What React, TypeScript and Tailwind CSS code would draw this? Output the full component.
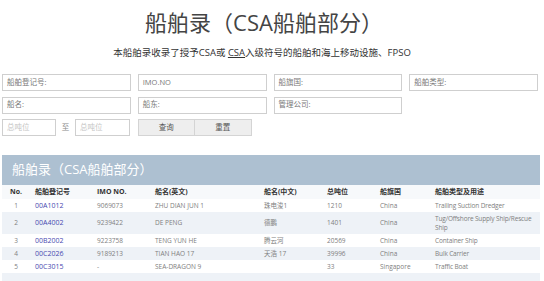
import React from "react";

const font = { fontFamily: '"Open Sans", "Noto Sans CJK SC", sans-serif' };

const rows = [
  { no: "1", reg: "00A1012", imo: "9069073", en: "ZHU DIAN JUN 1", cn: "珠电浚1", gt: "1210", flag: "China", type: "Trailing Suction Dredger" },
  { no: "2", reg: "00A4002", imo: "9239422", en: "DE PENG", cn: "德鹏", gt: "1401", flag: "China", type: "Tug/Offshore Supply Ship/Rescue Ship" },
  { no: "3", reg: "00B2002", imo: "9223758", en: "TENG YUN HE", cn: "腾云河", gt: "20569", flag: "China", type: "Container Ship" },
  { no: "4", reg: "00C2026", imo: "9189213", en: "TIAN HAO 17", cn: "天浩 17", gt: "39996", flag: "China", type: "Bulk Carrier" },
  { no: "5", reg: "00C3015", imo: "-", en: "SEA-DRAGON 9", cn: "", gt: "33", flag: "Singapore", type: "Traffic Boat" },
];

const cols = "grid grid-cols-[28px_62px_58px_109px_63px_53px_55px_110px]";

function Field({ label, light }: { label: string; light?: boolean }) {
  return (
    <div
      className={`h-[17px] border border-[#cfcfcf] bg-white flex items-center px-[4px] text-[7.5px] ${
        light ? "text-[#c4c4c4]" : "text-[#777]"
      }`}
    >
      {label}
    </div>
  );
}

export default function App() {
  return (
    <div className="w-[544px] h-[281px] overflow-hidden bg-white" style={font}>
      <div className="mt-[7px] pr-[16px] text-center text-[22px] leading-[30px] text-[#444]">
        船舶录（CSA船舶部分）
      </div>
      <div className="mt-[9px] pr-[20px] text-center text-[9.5px] leading-[14px] text-[#333]">
        本船舶录收录了授予CSA或 <span className="underline">CSA</span>入级符号的船舶和海上移动设施、FPSO
      </div>

      <div className="mt-[14px] px-[2px] w-[540px] grid grid-cols-4 gap-x-[7px] gap-y-[5.5px]">
        <Field label="船舶登记号:" />
        <Field label="IMO.NO" />
        <Field label="船旗国:" />
        <Field label="船舶类型:" />
        <Field label="船名:" />
        <Field label="船东:" />
        <Field label="管理公司:" />
        <div />
        <div className="flex items-center h-[17px]">
          <div className="w-[54px]">
            <Field label="总吨位" light />
          </div>
          <div className="w-[19px] text-center text-[7.5px] text-[#888]">至</div>
          <div className="w-[55px]">
            <Field label="总吨位" light />
          </div>
        </div>
        <div className="flex h-[17px]">
          <div className="w-[57px] border border-[#d4d4d4] bg-[#eeeeee] flex items-center justify-center text-[7.5px] text-[#555]">
            查询
          </div>
          <div className="w-[57px] border border-l-0 border-[#d4d4d4] bg-[#eeeeee] flex items-center justify-center text-[7.5px] text-[#555]">
            重置
          </div>
        </div>
      </div>

      <div className="mt-[19px] mx-[2px] w-[538px]">
        <div className="h-[30px] bg-[#adc0d1] pl-[10px] pt-[5px] text-[13px] leading-[18px] text-white">
          船舶录（CSA船舶部分）
        </div>
        <div className={`${cols} h-[14px] items-center bg-[#f7f9fb] text-[7px] font-bold text-[#333]`}>
          <div className="text-center">No.</div>
          <div className="pl-[5px]">船舶登记号</div>
          <div className="pl-[5px]">IMO NO.</div>
          <div className="pl-[5px]">船名(英文)</div>
          <div className="pl-[5px]">船名(中文)</div>
          <div className="pl-[5px]">总吨位</div>
          <div className="pl-[5px]">船旗国</div>
          <div className="pl-[5px]">船舶类型及用途</div>
        </div>
        {rows.map((r, i) => (
          <div
            key={r.no}
            className={`${cols} items-center py-[1.5px] min-h-[13px] text-[6.5px] leading-[9.5px] text-[#808080] ${
              i % 2 === 1 ? "bg-[#eef2f7]" : "bg-white"
            }`}
          >
            <div className="text-center">{r.no}</div>
            <div className="pl-[5px] text-[7px] text-[#4848b0]">{r.reg}</div>
            <div className="pl-[5px]">{r.imo}</div>
            <div className="pl-[5px]">{r.en}</div>
            <div className="pl-[5px]">{r.cn}</div>
            <div className="pl-[5px]">{r.gt}</div>
            <div className="pl-[5px]">{r.flag}</div>
            <div className="pl-[5px] tracking-[-0.15px]">{r.type}</div>
          </div>
        ))}
        <div className="h-[10px] bg-[#eef2f7]" />
      </div>
    </div>
  );
}
